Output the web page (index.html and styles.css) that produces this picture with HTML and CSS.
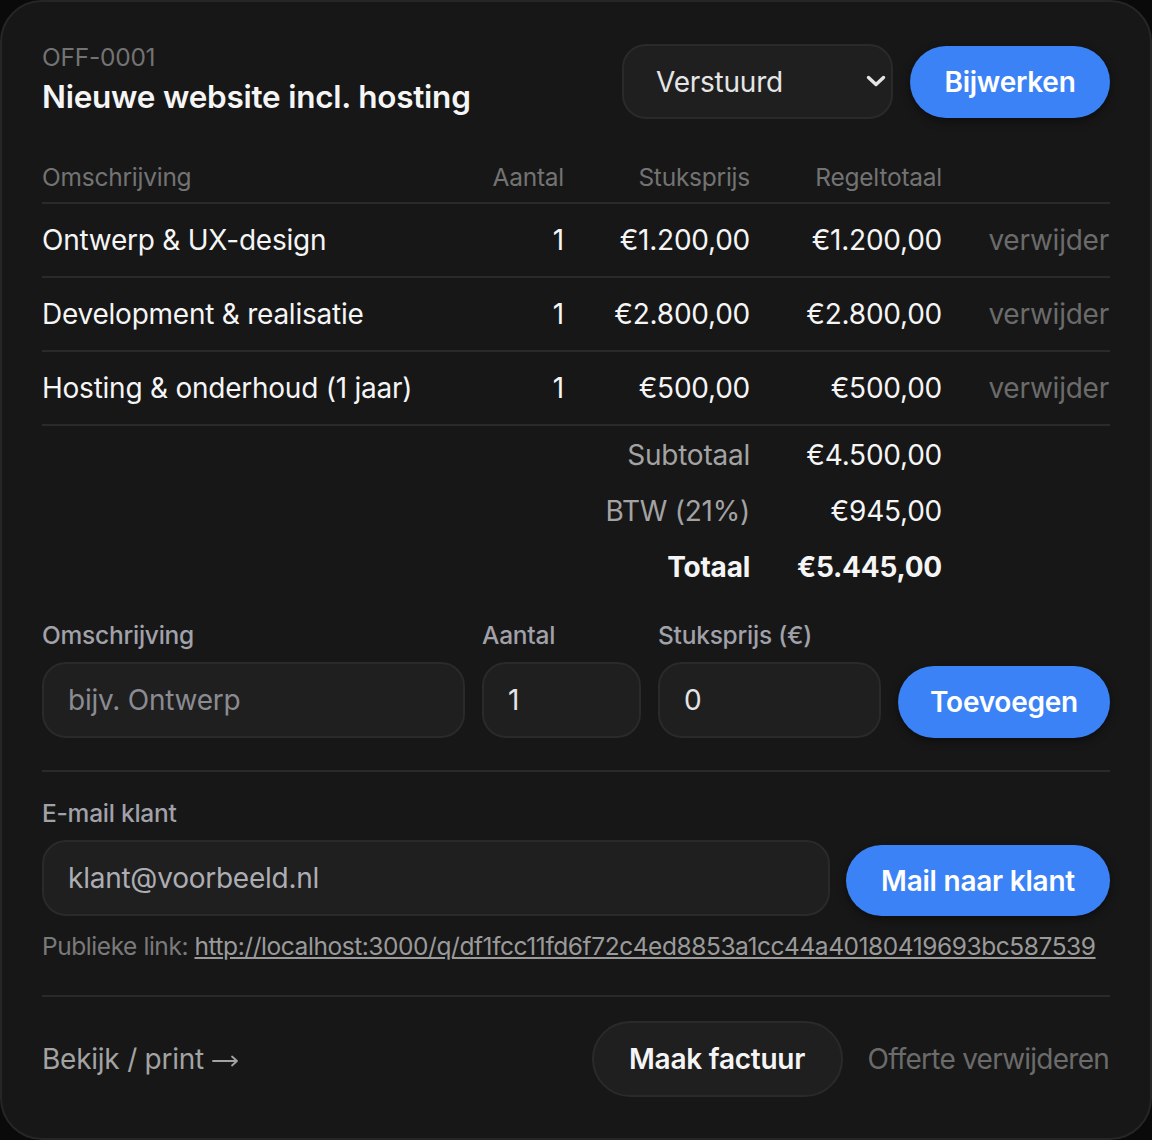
FILE: index.html
```html
<!DOCTYPE html>
<html lang="nl">
<head>
    <meta charset="UTF-8">
    <meta name="viewport" content="width=device-width, initial-scale=1.0">
    <title>OFF-0001 - Nieuwe website incl. hosting</title>
    <link rel="stylesheet" href="styles.css">
</head>
<body>
<div class="card">
    <div class="quote-head">
        <div>
            <div class="quote-number">OFF-0001</div>
            <h1 class="quote-title">Nieuwe website incl. hosting</h1>
        </div>
        <div class="head-actions">
            <div class="select-wrap">
                <select class="field status-select">
                    <option>Concept</option>
                    <option selected>Verstuurd</option>
                    <option>Geaccepteerd</option>
                    <option>Afgewezen</option>
                </select>
                <svg class="chevron" width="20" height="12" viewBox="0 0 20 12" aria-hidden="true">
                    <path d="M2.5 2.5 L10 9.5 L17.5 2.5" fill="none" stroke="#e5e5e5" stroke-width="3.4" stroke-linecap="round" stroke-linejoin="round"/>
                </svg>
            </div>
            <button class="btn btn-primary btn-update">Bijwerken</button>
        </div>
    </div>

    <table class="lines">
        <colgroup>
            <col>
            <col class="col-qty">
            <col class="col-price">
            <col class="col-total">
            <col class="col-action">
        </colgroup>
        <thead>
            <tr>
                <th>Omschrijving</th>
                <th class="num">Aantal</th>
                <th class="num">Stuksprijs</th>
                <th class="num">Regeltotaal</th>
                <th></th>
            </tr>
        </thead>
        <tbody>
            <tr>
                <td>Ontwerp &amp; UX-design</td>
                <td class="num">1</td>
                <td class="num">€1.200,00</td>
                <td class="num">€1.200,00</td>
                <td class="num"><a href="#" class="remove">verwijder</a></td>
            </tr>
            <tr>
                <td>Development &amp; realisatie</td>
                <td class="num">1</td>
                <td class="num">€2.800,00</td>
                <td class="num">€2.800,00</td>
                <td class="num"><a href="#" class="remove">verwijder</a></td>
            </tr>
            <tr>
                <td>Hosting &amp; onderhoud (1 jaar)</td>
                <td class="num">1</td>
                <td class="num">€500,00</td>
                <td class="num">€500,00</td>
                <td class="num"><a href="#" class="remove">verwijder</a></td>
            </tr>
        </tbody>
        <tfoot>
            <tr>
                <td colspan="3" class="num sum-label">Subtotaal</td>
                <td class="num">€4.500,00</td>
                <td></td>
            </tr>
            <tr>
                <td colspan="3" class="num sum-label">BTW (21%)</td>
                <td class="num">€945,00</td>
                <td></td>
            </tr>
            <tr class="grand-total">
                <td colspan="3" class="num">Totaal</td>
                <td class="num">€5.445,00</td>
                <td></td>
            </tr>
        </tfoot>
    </table>

    <form class="add-line">
        <label class="form-group grow">
            <span class="form-label">Omschrijving</span>
            <input class="field" type="text" placeholder="bijv. Ontwerp">
        </label>
        <label class="form-group qty">
            <span class="form-label">Aantal</span>
            <input class="field" type="text" value="1">
        </label>
        <label class="form-group price">
            <span class="form-label">Stuksprijs (€)</span>
            <input class="field" type="text" value="0">
        </label>
        <button type="submit" class="btn btn-primary btn-add">Toevoegen</button>
    </form>

    <hr class="divider">

    <div class="mail-section">
        <label class="form-label" for="email">E-mail klant</label>
        <div class="mail-row">
            <input id="email" class="field field-email" type="email" value="klant@voorbeeld.nl">
            <button class="btn btn-primary btn-mail">Mail naar klant</button>
        </div>
        <p class="public-link">Publieke link: <a href="#">http://localhost:3000/q/df1fcc11fd6f72c4ed8853a1cc44a40180419693bc587539</a></p>
    </div>

    <hr class="divider divider-bottom">

    <div class="footer-actions">
        <a href="#" class="view-link">Bekijk / print
            <svg class="arrow" width="27" height="14" viewBox="0 0 27 14" aria-hidden="true">
                <path d="M1 7 H25 M20 2.5 L25 7 L20 11.5" fill="none" stroke="#a3a3a3" stroke-width="1.8" stroke-linecap="round" stroke-linejoin="round"/>
            </svg>
        </a>
        <div class="footer-right">
            <button class="btn btn-secondary">Maak factuur</button>
            <a href="#" class="delete-link">Offerte verwijderen</a>
        </div>
    </div>
</div>
</body>
</html>
```

FILE: styles.css
```css
body {
    margin: 0;
    background-color: #0a0a0a;
    font-family: Inter, "Noto Sans", Arial, sans-serif;
    letter-spacing: -0.015em;
    color: #f5f5f5;
}
.card {
    width: 1152px;
    height: 1140px;
    box-sizing: border-box;
    background: #171717;
    border: 2px solid #262626;
    border-radius: 42px;
    padding: 40px;
}

/* head */
.quote-head {
    display: flex;
    justify-content: space-between;
    align-items: flex-start;
}
.quote-number {
    font-size: 24.5px;
    line-height: 31px;
    color: #737373;
}
.quote-title {
    margin: 3px 0 0;
    font-size: 31.5px;
    line-height: 41px;
    font-weight: 600;
    color: #f5f5f5;
}
.head-actions {
    display: flex;
    align-items: center;
    gap: 17px;
    margin-top: 2px;
}
.select-wrap {
    position: relative;
}
.field {
    box-sizing: border-box;
    height: 76px;
    background: #1f1f1f;
    border: 2px solid #2a2a2a;
    border-radius: 24px;
    color: #e5e5e5;
    font-family: inherit;
    font-size: 28px;
    letter-spacing: inherit;
    padding: 0 24px;
    outline: none;
    width: 100%;
}
.field::placeholder {
    color: #8b8b92;
}
.field-email {
    color: #adadb4;
}
.status-select {
    -webkit-appearance: none;
    appearance: none;
    width: 271px;
    height: 75px;
    padding: 0 32px;
}
.chevron {
    position: absolute;
    right: 7px;
    top: 31px;
    pointer-events: none;
}
.btn {
    font-family: inherit;
    font-size: 28px;
    font-weight: 600;
    letter-spacing: inherit;
    border-radius: 999px;
    cursor: pointer;
    white-space: nowrap;
}
.btn-primary {
    background-color: #3b82f6;
    color: #fff;
    border: none;
    height: 72px;
    box-shadow: 0 3px 10px rgba(0, 0, 0, 0.45);
}
.btn-update {
    width: 200px;
}
.btn-add {
    width: 212px;
}
.btn-mail {
    width: 264px;
    height: 71px;
}
.btn-secondary {
    background: #1f1f1f;
    color: #f5f5f5;
    border: 2px solid #2a2a2a;
    height: 76px;
    width: 251px;
}

/* line items */
.lines {
    width: 100%;
    margin-top: 41px;
    border-collapse: collapse;
    table-layout: fixed;
}
.col-qty { width: 100px; }
.col-price { width: 186px; }
.col-total { width: 192px; }
.col-action { width: 168px; }
.lines th {
    font-size: 24.5px;
    line-height: 35px;
    font-weight: 400;
    color: #737373;
    text-align: left;
    padding: 0 0 7px;
    border-bottom: 2px solid #2a2a2a;
}
.lines td {
    font-size: 28px;
    line-height: 40px;
    padding: 16px 0;
    color: #f5f5f5;
}
.lines tbody td {
    border-bottom: 2px solid #2a2a2a;
}
.lines .num {
    text-align: right;
}
.remove {
    color: #6b6b6b;
    text-decoration: none;
    margin-right: 1px;
}
.lines tfoot td {
    padding: 8px 0;
}
.lines tfoot tr:first-child td {
    padding-top: 9px;
}
.lines .sum-label {
    color: #a3a3a3;
}
.grand-total td {
    font-weight: 700;
}

/* add line */
.add-line {
    display: flex;
    align-items: flex-end;
    gap: 17px;
    margin-top: 23px;
}
.form-group {
    display: flex;
    flex-direction: column;
    gap: 9px;
}
.form-group.grow {
    flex: 1;
}
.form-group.qty {
    width: 159px;
}
.form-group.price {
    width: 223px;
}
.form-label {
    font-size: 24.5px;
    line-height: 35px;
    font-weight: 500;
    color: #a1a1aa;
}
.divider {
    border: none;
    border-top: 2px solid #2a2a2a;
    margin: 32px 0 0;
}

/* mail */
.mail-section {
    margin-top: 24px;
}
.mail-section .form-label {
    display: block;
}
.mail-row {
    display: flex;
    align-items: flex-end;
    gap: 16px;
    margin-top: 9px;
}
.mail-row .field {
    flex: 1;
}
.public-link {
    margin: 13px 0 0;
    font-size: 24.5px;
    line-height: 35px;
    color: #7a7a7a;
    letter-spacing: -0.018em;
    white-space: nowrap;
}
.public-link a {
    color: #9a9a9a;
}
.divider-bottom {
    margin-top: 31px;
}

/* footer */
.footer-actions {
    display: flex;
    justify-content: space-between;
    align-items: center;
    margin-top: 24px;
}
.view-link {
    display: flex;
    align-items: center;
    gap: 8px;
    font-size: 28px;
    color: #a3a3a3;
    text-decoration: none;
}
.arrow {
    margin-top: 3px;
}
.footer-right {
    display: flex;
    align-items: center;
    gap: 25px;
}
.delete-link {
    font-size: 28px;
    color: #6b6b6b;
    letter-spacing: -0.027em;
    text-decoration: none;
    margin-right: 1px;
}
```
